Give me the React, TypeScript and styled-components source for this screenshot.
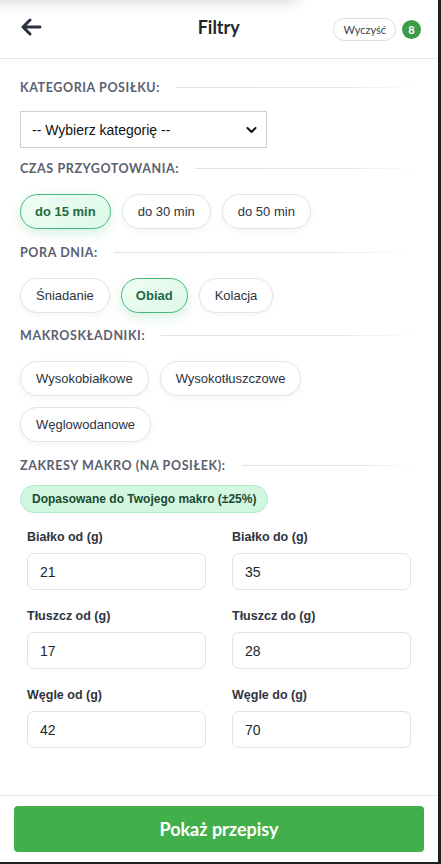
import React, { ReactElement } from 'react';
import styled, { createGlobalStyle, css } from 'styled-components';

const GlobalStyle = createGlobalStyle`
  * { box-sizing: border-box; }
  html, body {
    margin: 0;
    padding: 0;
    background: #1f1f1f;
  }
  body {
    font-family: 'Liberation Sans', Arial, sans-serif;
    color: #2d3340;
  }
`;

const Panel = styled.div`
  position: relative;
  width: 438px;
  height: 862px;
  background: #fff;
  display: flex;
  flex-direction: column;
  overflow: hidden;
`;

const Header = styled.header`
  position: relative;
  height: 59px;
  flex-shrink: 0;
  display: flex;
  align-items: center;
  padding: 0 17px 0 20px;
  border-bottom: 1px solid #e6e7eb;
  &::before {
    content: '';
    position: absolute;
    left: -20px;
    top: -22px;
    width: 320px;
    height: 22px;
    border-radius: 14px;
    box-shadow: 0 2px 14px rgba(0, 0, 0, 0.16);
  }
`;

const BackButton = styled.button`
  border: 0;
  background: none;
  padding: 0;
  width: 24px;
  height: 24px;
  display: flex;
  align-items: center;
  margin-top: -4px;
`;

const Title = styled.h1`
  flex: 1;
  margin: -4px 0 0 0;
  text-align: center;
  font-family: Lato, 'Liberation Sans', sans-serif;
  font-size: 18px;
  font-weight: 700;
  color: #22252b;
  padding-left: 60px;
`;

const ClearButton = styled.button`
  height: 23px;
  padding: 0 9px;
  border: 1px solid #dcdde2;
  border-radius: 12px;
  background: #fff;
  font-family: Lato, 'Liberation Sans', sans-serif;
  font-size: 11px;
  color: #3c4048;
`;

const CountBadge = styled.span`
  margin-left: 6px;
  width: 19px;
  height: 19px;
  border-radius: 50%;
  background: #3d9c48;
  color: #fff;
  font-family: Lato, 'Liberation Sans', sans-serif;
  font-weight: 700;
  font-size: 11px;
  display: flex;
  align-items: center;
  justify-content: center;
`;

const Content = styled.main`
  flex: 1;
  padding: 20px 20px 0 20px;
`;

const Section = styled.section<{ $pad?: number }>`
  margin-bottom: ${({ $pad }) => $pad ?? 12}px;
`;

const SectionLabel = styled.div<{ $gapBelow?: number }>`
  display: flex;
  align-items: center;
  gap: 16px;
  height: 16px;
  margin-bottom: ${({ $gapBelow }) => $gapBelow ?? 16}px;
  font-family: Lato, 'Liberation Sans', sans-serif;
  font-size: 12.5px;
  font-weight: 700;
  letter-spacing: 0.6px;
  color: #5b6070;
  white-space: nowrap;
  &::after {
    content: '';
    flex: 1;
    height: 1px;
    background: linear-gradient(90deg, #dfe1ea 0%, #e6e8ef 70%, rgba(230, 232, 239, 0) 100%);
  }
`;

const SelectBox = styled.div`
  width: 247px;
  height: 37px;
  border: 1px solid #cfd0d3;
  background: #fff;
  display: flex;
  align-items: center;
  justify-content: space-between;
  padding: 0 9px 0 11px;
  font-size: 14px;
  color: #111;
`;

const PillRow = styled.div`
  display: flex;
  flex-wrap: wrap;
  gap: 11px 11px;
  padding-top: 2px;
`;

const Pill = styled.button<{ $active?: boolean }>`
  height: 35px;
  padding: 0 15px;
  border-radius: 18px;
  border: 1px solid #e2e3ea;
  background: #fff;
  font-family: 'Liberation Sans', Arial, sans-serif;
  font-size: 13px;
  color: #2d3340;
  box-shadow: 0 2px 6px rgba(30, 40, 60, 0.05);
  ${({ $active }) =>
    $active &&
    css`
      padding: 0 14px;
      border-color: #45b97a;
      background: linear-gradient(135deg, #f0fdf5 0%, #dcf8e7 100%);
      color: #1f6a41;
      font-weight: 700;
      box-shadow: 0 4px 12px rgba(60, 190, 120, 0.22);
    `}
`;

const MatchBadge = styled.div`
  display: inline-flex;
  align-items: center;
  height: 28px;
  padding: 0 11px;
  border-radius: 14px;
  border: 1px solid #a8eac3;
  background: #d2f7e1;
  color: #1d4a30;
  font-size: 12px;
  font-weight: 700;
`;

const MacroGrid = styled.div`
  display: grid;
  grid-template-columns: 179px 179px;
  column-gap: 26px;
  row-gap: 18px;
  padding: 16px 0 0 7px;
`;

const Field = styled.label`
  display: flex;
  flex-direction: column;
`;

const FieldLabel = styled.span`
  font-size: 12.5px;
  font-weight: 700;
  color: #2f3440;
  line-height: 16px;
  margin-bottom: 8px;
`;

const NumberInput = styled.input`
  height: 37px;
  border: 1px solid #e1e2e8;
  border-radius: 7px;
  padding: 0 12px;
  font-family: 'Liberation Sans', Arial, sans-serif;
  font-size: 14px;
  color: #22252b;
  background: #fff;
  outline: none;
`;

const Footer = styled.footer`
  flex-shrink: 0;
  border-top: 1px solid #e6e9ef;
  padding: 10px 14px 10px 14px;
`;

const SubmitButton = styled.button`
  width: 410px;
  height: 46px;
  border: 0;
  border-radius: 4px;
  background: #42b04a;
  color: #fff;
  font-family: Lato, 'Liberation Sans', sans-serif;
  font-size: 18px;
  font-weight: 700;
`;

const timeOptions = [
  { label: 'do 15 min', active: true },
  { label: 'do 30 min' },
  { label: 'do 50 min' },
];

const dayOptions = [
  { label: 'Śniadanie' },
  { label: 'Obiad', active: true },
  { label: 'Kolacja' },
];

const macroOptions = ['Wysokobiałkowe', 'Wysokotłuszczowe', 'Węglowodanowe'];

const macroFields = [
  { label: 'Białko od (g)', value: '21' },
  { label: 'Białko do (g)', value: '35' },
  { label: 'Tłuszcz od (g)', value: '17' },
  { label: 'Tłuszcz do (g)', value: '28' },
  { label: 'Węgle od (g)', value: '42' },
  { label: 'Węgle do (g)', value: '70' },
];

const BackArrow = (): ReactElement => (
  <svg width="22" height="18" viewBox="0 0 22 18" fill="none">
    <path
      d="M20 9H3M10 2L3 9l7 7"
      stroke="#2b3140"
      strokeWidth="3"
      strokeLinecap="round"
      strokeLinejoin="round"
    />
  </svg>
);

const Chevron = (): ReactElement => (
  <svg width="11" height="8" viewBox="0 0 11 8" fill="none">
    <path d="M1.5 2l4 4 4-4" stroke="#111" strokeWidth="2" strokeLinecap="round" strokeLinejoin="round" />
  </svg>
);

const App = (): ReactElement => {
  return (
    <React.Fragment>
      <GlobalStyle />
      <Panel>
        <Header>
          <BackButton>
            <BackArrow />
          </BackButton>
          <Title>Filtry</Title>
          <ClearButton>Wyczyść</ClearButton>
          <CountBadge>8</CountBadge>
        </Header>

        <Content>
          <Section>
            <SectionLabel>KATEGORIA POSIŁKU:</SectionLabel>
            <SelectBox>
              <span>-- Wybierz kategorię --</span>
              <Chevron />
            </SelectBox>
          </Section>

          <Section $pad={15}>
            <SectionLabel>CZAS PRZYGOTOWANIA:</SectionLabel>
            <PillRow>
              {timeOptions.map((o) => (
                <Pill key={o.label} $active={o.active}>
                  {o.label}
                </Pill>
              ))}
            </PillRow>
          </Section>

          <Section $pad={14}>
            <SectionLabel>PORA DNIA:</SectionLabel>
            <PillRow>
              {dayOptions.map((o) => (
                <Pill key={o.label} $active={o.active}>
                  {o.label}
                </Pill>
              ))}
            </PillRow>
          </Section>

          <Section $pad={15}>
            <SectionLabel>MAKROSKŁADNIKI:</SectionLabel>
            <PillRow>
              {macroOptions.map((o) => (
                <Pill key={o}>{o}</Pill>
              ))}
            </PillRow>
          </Section>

          <Section>
            <SectionLabel $gapBelow={12}>ZAKRESY MAKRO (NA POSIŁEK):</SectionLabel>
            <MatchBadge>Dopasowane do Twojego makro (±25%)</MatchBadge>
            <MacroGrid>
              {macroFields.map((f) => (
                <Field key={f.label}>
                  <FieldLabel>{f.label}</FieldLabel>
                  <NumberInput type="text" defaultValue={f.value} />
                </Field>
              ))}
            </MacroGrid>
          </Section>
        </Content>

        <Footer>
          <SubmitButton>Pokaż przepisy</SubmitButton>
        </Footer>
      </Panel>
    </React.Fragment>
  );
};

export default App;
